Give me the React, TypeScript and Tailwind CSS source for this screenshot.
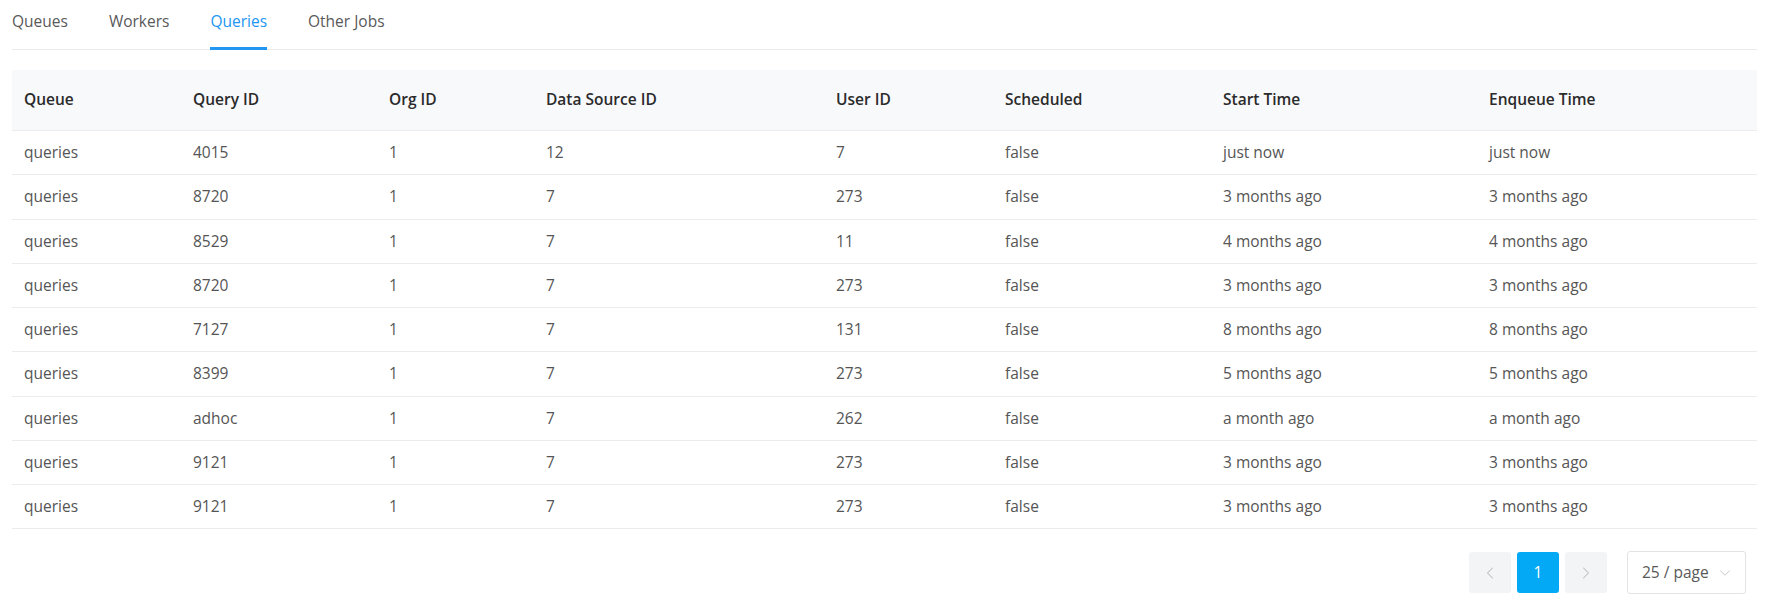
import { ChevronLeft, ChevronRight, ChevronDown } from "lucide-react";

type QueryJob = {
  queue: string;
  queryId: string;
  orgId: number;
  dataSourceId: number;
  userId: number;
  scheduled: boolean;
  startTime: string;
  enqueueTime: string;
};

const tabs = ["Queues", "Workers", "Queries", "Other Jobs"];
const activeTab = "Queries";

const columns = [
  { title: "Queue", width: "w-[169px]" },
  { title: "Query ID", width: "w-[196px]" },
  { title: "Org ID", width: "w-[157px]" },
  { title: "Data Source ID", width: "w-[290px]" },
  { title: "User ID", width: "w-[169px]" },
  { title: "Scheduled", width: "w-[218px]" },
  { title: "Start Time", width: "w-[266px]" },
  { title: "Enqueue Time", width: "w-[280px]" }
];

const jobs: QueryJob[] = [
  { queue: "queries", queryId: "4015", orgId: 1, dataSourceId: 12, userId: 7, scheduled: false, startTime: "just now", enqueueTime: "just now" },
  { queue: "queries", queryId: "8720", orgId: 1, dataSourceId: 7, userId: 273, scheduled: false, startTime: "3 months ago", enqueueTime: "3 months ago" },
  { queue: "queries", queryId: "8529", orgId: 1, dataSourceId: 7, userId: 11, scheduled: false, startTime: "4 months ago", enqueueTime: "4 months ago" },
  { queue: "queries", queryId: "8720", orgId: 1, dataSourceId: 7, userId: 273, scheduled: false, startTime: "3 months ago", enqueueTime: "3 months ago" },
  { queue: "queries", queryId: "7127", orgId: 1, dataSourceId: 7, userId: 131, scheduled: false, startTime: "8 months ago", enqueueTime: "8 months ago" },
  { queue: "queries", queryId: "8399", orgId: 1, dataSourceId: 7, userId: 273, scheduled: false, startTime: "5 months ago", enqueueTime: "5 months ago" },
  { queue: "queries", queryId: "adhoc", orgId: 1, dataSourceId: 7, userId: 262, scheduled: false, startTime: "a month ago", enqueueTime: "a month ago" },
  { queue: "queries", queryId: "9121", orgId: 1, dataSourceId: 7, userId: 273, scheduled: false, startTime: "3 months ago", enqueueTime: "3 months ago" },
  { queue: "queries", queryId: "9121", orgId: 1, dataSourceId: 7, userId: 273, scheduled: false, startTime: "3 months ago", enqueueTime: "3 months ago" }
];

export default function App() {
  return (
    <div className="min-h-screen bg-white pl-3 pr-4 font-['Open_Sans',sans-serif] text-[15.5px] text-[#555]">
      {/* tabs */}
      <div className="flex gap-[41px] border-b border-[#eaeaea]">
        {tabs.map((tab) => (
          <div
            key={tab}
            className={`relative h-[49px] pt-[10px] leading-[22px] ${tab === activeTab ? "text-[#2196f3]" : "text-[#595959]"}`}
          >
            {tab}
            {tab === activeTab ? <span className="absolute bottom-[-1px] left-0 right-0 h-[3px] bg-[#2196f3]" /> : null}
          </div>
        ))}
      </div>

      {/* table */}
      <table className="mt-5 w-full table-fixed border-separate border-spacing-0">
        <colgroup>
          {columns.map((col) => (
            <col key={col.title} className={col.width} />
          ))}
        </colgroup>
        <thead>
          <tr>
            {columns.map((col) => (
              <th
                key={col.title}
                className="h-[61px] border-b border-[#ececec] bg-[#f8f9fb] px-3 text-left font-semibold text-[#2b2b2b]"
              >
                {col.title}
              </th>
            ))}
          </tr>
        </thead>
        <tbody>
          {jobs.map((job, i) => (
            <tr key={i}>
              <td className="h-[44.25px] border-b border-[#ececec] px-3">{job.queue}</td>
              <td className="h-[44.25px] border-b border-[#ececec] px-3">{job.queryId}</td>
              <td className="h-[44.25px] border-b border-[#ececec] px-3">{job.orgId}</td>
              <td className="h-[44.25px] border-b border-[#ececec] px-3">{job.dataSourceId}</td>
              <td className="h-[44.25px] border-b border-[#ececec] px-3">{job.userId}</td>
              <td className="h-[44.25px] border-b border-[#ececec] px-3">{String(job.scheduled)}</td>
              <td className="h-[44.25px] border-b border-[#ececec] px-3">{job.startTime}</td>
              <td className="h-[44.25px] border-b border-[#ececec] px-3">{job.enqueueTime}</td>
            </tr>
          ))}
        </tbody>
      </table>

      {/* pagination */}
      <div className="mt-[22px] flex items-center justify-end pr-[11px]">
        <div className="flex gap-[6px]">
          <button className="flex h-[41px] w-[42px] items-center justify-center rounded-[3px] bg-[#f3f4f6] text-[#bdbdbd]">
            <ChevronLeft size={20} strokeWidth={1.25} />
          </button>
          <button className="flex h-[41px] w-[42px] items-center justify-center rounded-[3px] bg-[#03a9f4] text-white">
            1
          </button>
          <button className="flex h-[41px] w-[42px] items-center justify-center rounded-[3px] bg-[#f3f4f6] text-[#bdbdbd]">
            <ChevronRight size={20} strokeWidth={1.25} />
          </button>
        </div>
        <div className="ml-5 flex h-[43px] w-[119px] items-center justify-between rounded-[3px] border border-[#e3e3e3] pl-[14px] pr-[11px] text-[#595959]">
          <span>25 / page</span>
          <ChevronDown size={18} strokeWidth={1.25} className="text-[#c4c4c4]" />
        </div>
      </div>
    </div>
  );
}
